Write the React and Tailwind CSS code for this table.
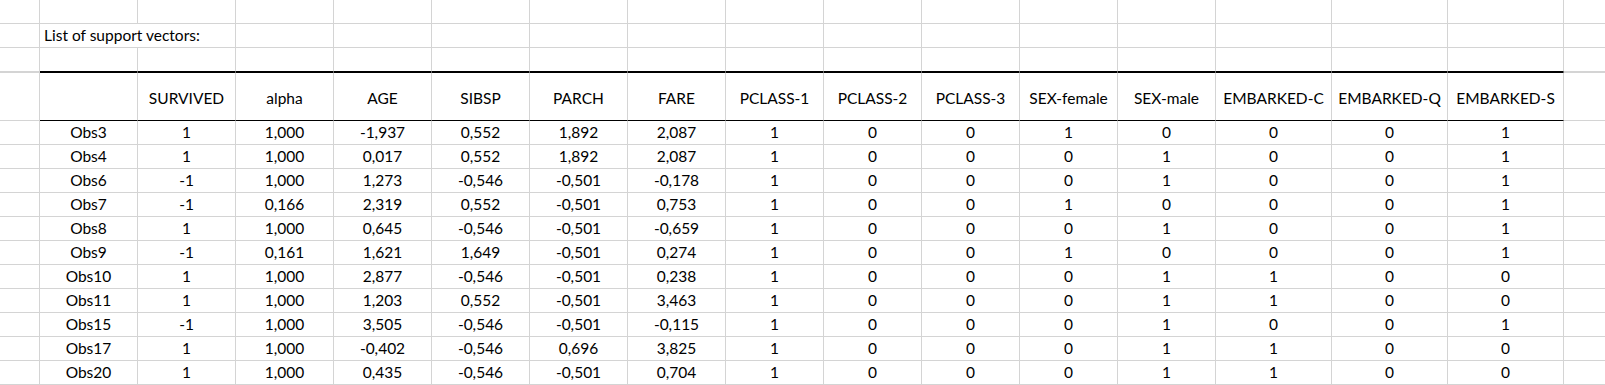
import React from "react";

const headers = ["SURVIVED","alpha","AGE","SIBSP","PARCH","FARE","PCLASS-1","PCLASS-2","PCLASS-3","SEX-female","SEX-male","EMBARKED-C","EMBARKED-Q","EMBARKED-S"];

const rows = [
  ["Obs3","1","1,000","-1,937","0,552","1,892","2,087","1","0","0","1","0","0","0","1"],
  ["Obs4","1","1,000","0,017","0,552","1,892","2,087","1","0","0","0","1","0","0","1"],
  ["Obs6","-1","1,000","1,273","-0,546","-0,501","-0,178","1","0","0","0","1","0","0","1"],
  ["Obs7","-1","0,166","2,319","0,552","-0,501","0,753","1","0","0","1","0","0","0","1"],
  ["Obs8","1","1,000","0,645","-0,546","-0,501","-0,659","1","0","0","0","1","0","0","1"],
  ["Obs9","-1","0,161","1,621","1,649","-0,501","0,274","1","0","0","1","0","0","0","1"],
  ["Obs10","1","1,000","2,877","-0,546","-0,501","0,238","1","0","0","0","1","1","0","0"],
  ["Obs11","1","1,000","1,203","0,552","-0,501","3,463","1","0","0","0","1","1","0","0"],
  ["Obs15","-1","1,000","3,505","-0,546","-0,501","-0,115","1","0","0","0","1","0","0","1"],
  ["Obs17","1","1,000","-0,402","-0,546","0,696","3,825","1","0","0","0","1","1","0","0"],
  ["Obs20","1","1,000","0,435","-0,546","-0,501","0,704","1","0","0","0","1","1","0","0"],
];

// widths for columns B..P (15 columns)
const widths = ["w-[98px]","w-[98px]","w-[98px]","w-[98px]","w-[98px]","w-[98px]","w-[98px]","w-[98px]","w-[98px]","w-[98px]","w-[98px]","w-[98px]","w-[116px]","w-[116px]","w-[116px]"];

function Cell({ w, className = "", children }) {
  return (
    <div className={`${w} shrink-0 border-r border-b border-[#d4d4d4] flex items-center justify-center ${className}`}>
      {children}
    </div>
  );
}

function EdgeA({ className = "" }) {
  return <div className={`w-[40px] shrink-0 border-r border-b border-[#d4d4d4] ${className}`} />;
}
function EdgeQ({ className = "" }) {
  return <div className={`flex-1 border-b border-[#d4d4d4] ${className}`} />;
}

export default function App() {
  return (
    <div className="w-[1605px] h-[385px] overflow-hidden bg-white text-black text-[15.5px] leading-none" style={{ fontFamily: "Lato, 'Open Sans', sans-serif" }}>
      {/* Row 1 */}
      <div className="flex h-[24px]">
        <EdgeA />
        {widths.map((w, i) => <Cell key={i} w={w} />)}
        <EdgeQ />
      </div>
      {/* Row 2 */}
      <div className="flex h-[24px]">
        <EdgeA />
        <div className="w-[98px] shrink-0 border-b border-[#d4d4d4] flex items-center pl-[4px] pt-[1px] whitespace-nowrap relative z-10">
          List of support vectors:
        </div>
        {widths.slice(1).map((w, i) => <Cell key={i} w={w} />)}
        <EdgeQ />
      </div>
      {/* Row 3 */}
      <div className="flex h-[24px]">
        <EdgeA />
        {widths.map((w, i) => <Cell key={i} w={w} className="border-b-black" />)}
        <EdgeQ />
      </div>
      {/* Header row */}
      <div className="flex h-[49px]">
        <EdgeA className="border-t" />
        <Cell w={widths[0]} className="border-t border-t-black border-b-black" />
        {headers.map((h, i) => (
          <Cell key={i} w={widths[i + 1]} className="border-t border-t-black border-b-black pt-[4px]">
            {h}
          </Cell>
        ))}
        <EdgeQ className="border-t" />
      </div>
      {/* Data rows */}
      {rows.map((r, ri) => (
        <div key={ri} className="flex h-[24px]">
          <EdgeA />
          {r.map((v, ci) => (
            <Cell key={ci} w={widths[ci]} className="pt-[1px]">{v}</Cell>
          ))}
          <EdgeQ />
        </div>
      ))}
    </div>
  );
}
